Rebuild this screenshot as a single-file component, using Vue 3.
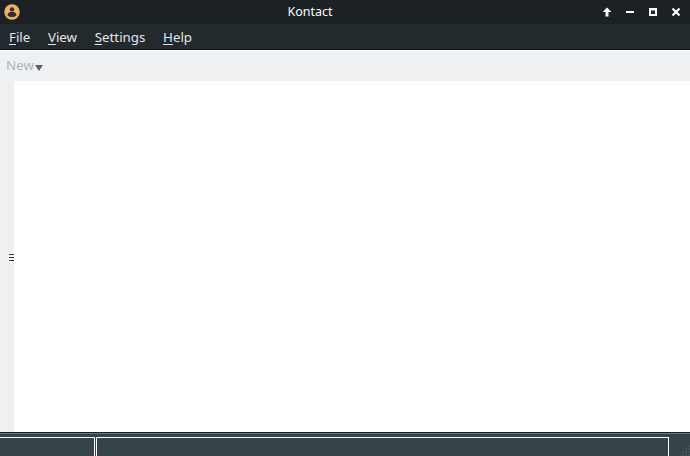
<script setup>
const menus = [
  { key: 'F', rest: 'ile' },
  { key: 'V', rest: 'iew' },
  { key: 'S', rest: 'ettings' },
  { key: 'H', rest: 'elp' },
]
const gripDots = []
for (let row = 0; row < 4; row++) {
  for (let col = 3 - row; col < 4; col++) {
    gripDots.push({ x: col * 3, y: row * 3 })
  }
}
</script>

<template>
  <div class="window">
    <header class="titlebar">
      <svg class="app-icon" width="16" height="16" viewBox="0 0 16 16">
        <circle cx="8" cy="8" r="7.7" fill="#f6b15c" />
        <circle cx="8" cy="5.4" r="2.2" fill="#2c2f33" />
        <path d="M3.6 11.2c0-2 1.6-3.1 3-3.1h2.8c1.4 0 3 1.1 3 3.1v.4c-1.200 1-2.700 1.500-4.400 1.500s-3.200-.5-4.400-1.500z" fill="#2c2f33" />
      </svg>
      <span class="title">Kontact</span>
      <div class="controls">
        <svg width="12" height="12" viewBox="0 0 12 12"><path d="M6 1.500 10.500 6H7.500v4.500h-3V6H1.500z" fill="#fcfcfc" /></svg>
        <svg width="12" height="12" viewBox="0 0 12 12"><rect x="2" y="5" width="8" height="2" fill="#fcfcfc" /></svg>
        <svg width="12" height="12" viewBox="0 0 12 12"><path d="M2 2h8v8H2zM4 4.500v3.500h4V4.500z" fill="#fcfcfc" fill-rule="evenodd" /></svg>
        <svg width="12" height="12" viewBox="0 0 12 12"><path d="M2.500 2.500 9.500 9.500M9.500 2.500 2.500 9.500" stroke="#fcfcfc" stroke-width="2.200" /></svg>
      </div>
    </header>

    <nav class="menubar">
      <span v-for="m in menus" :key="m.key" class="menu"><u>{{ m.key }}</u>{{ m.rest }}</span>
    </nav>

    <div class="toolbar">
      <span class="new">New</span>
      <svg class="caret" width="8" height="6" viewBox="0 0 8 6"><path d="M0 0h8L4 6z" fill="#5c6265" /></svg>
    </div>

    <main class="body">
      <aside class="rail">
        <div class="handle"><i></i><i></i><i></i></div>
      </aside>
      <section class="content"></section>
    </main>

    <footer class="status">
      <div class="panel first"></div>
      <div class="panel middle"></div>
      <div class="panel last"></div>
      <svg class="grip" width="11" height="11" viewBox="0 0 11 11">
        <rect v-for="(d, i) in gripDots" :key="i" :x="d.x" :y="d.y" width="2" height="2" fill="#434f55" />
      </svg>
    </footer>
  </div>
</template>

<style>
html, body { margin: 0; background: #fff; overflow: hidden; }
</style>

<style scoped>
.window {
  width: 690px;
  height: 456px;
  display: flex;
  flex-direction: column;
  font-family: "Noto Sans", sans-serif;
}
.titlebar {
  height: 24px;
  flex: none;
  background: #1b2124;
  display: flex;
  align-items: center;
  padding: 0 8px 0 4px;
  position: relative;
  box-sizing: border-box;
}
.app-icon { flex: none; margin-bottom: 1px; }
.title {
  position: absolute;
  left: 0;
  right: 70px;
  text-align: center;
  color: #fcfcfc;
  font-size: 12.500px;
  line-height: 24px;
}
.controls {
  margin-left: auto;
  display: flex;
  gap: 11px;
  position: relative;
}
.menubar {
  height: 26px;
  flex: none;
  background: #232a2e;
  display: flex;
  align-items: center;
  gap: 17.600px;
  padding: 1px 0 0 9px;
  box-sizing: border-box;
  border-bottom: 1px solid #0c0f10;
  color: #e3e5e7;
  font-size: 13.330px;
}
.menu u { text-underline-offset: 2px; }
.toolbar {
  height: 31px;
  flex: none;
  background: #eff0f1;
  border-top: 1px solid #fff;
  box-sizing: border-box;
  display: flex;
  align-items: center;
  padding: 0 0 2px 6px;
}
.new { color: #b0b3b5; font-size: 13.330px; }
.caret { margin: 5px 0 0 1px; }
.body { flex: 1; display: flex; min-height: 0; }
.rail {
  width: 14px;
  flex: none;
  background: #eff0f1;
  display: flex;
  align-items: center;
  justify-content: flex-end;
}
.handle {
  width: 5px;
  margin-top: 2px;
  padding: 1px 0;
  background: #fff;
  display: flex;
  flex-direction: column;
  gap: 2px;
}
.handle i { display: block; height: 1px; background: #31363b; }
.content { flex: 1; background: #fff; }
.status {
  height: 24px;
  flex: none;
  background: #36444a;
  border-top: 1px solid #1b2124;
  box-shadow: inset 0 1px 0 #6c7478;
  box-sizing: border-box;
  display: flex;
  padding-top: 4px;
  position: relative;
}
.panel { box-sizing: border-box; border-top: 1px solid #fcfcfc; }
.first { width: 95px; border-right: 1px solid #fcfcfc; }
.middle { width: 573px; margin-left: 1px; border-left: 1px solid #fcfcfc; border-right: 1px solid #fcfcfc; }
.last { flex: 1; border-top: 0; }
.grip { position: absolute; right: 0; bottom: 0; }
</style>
